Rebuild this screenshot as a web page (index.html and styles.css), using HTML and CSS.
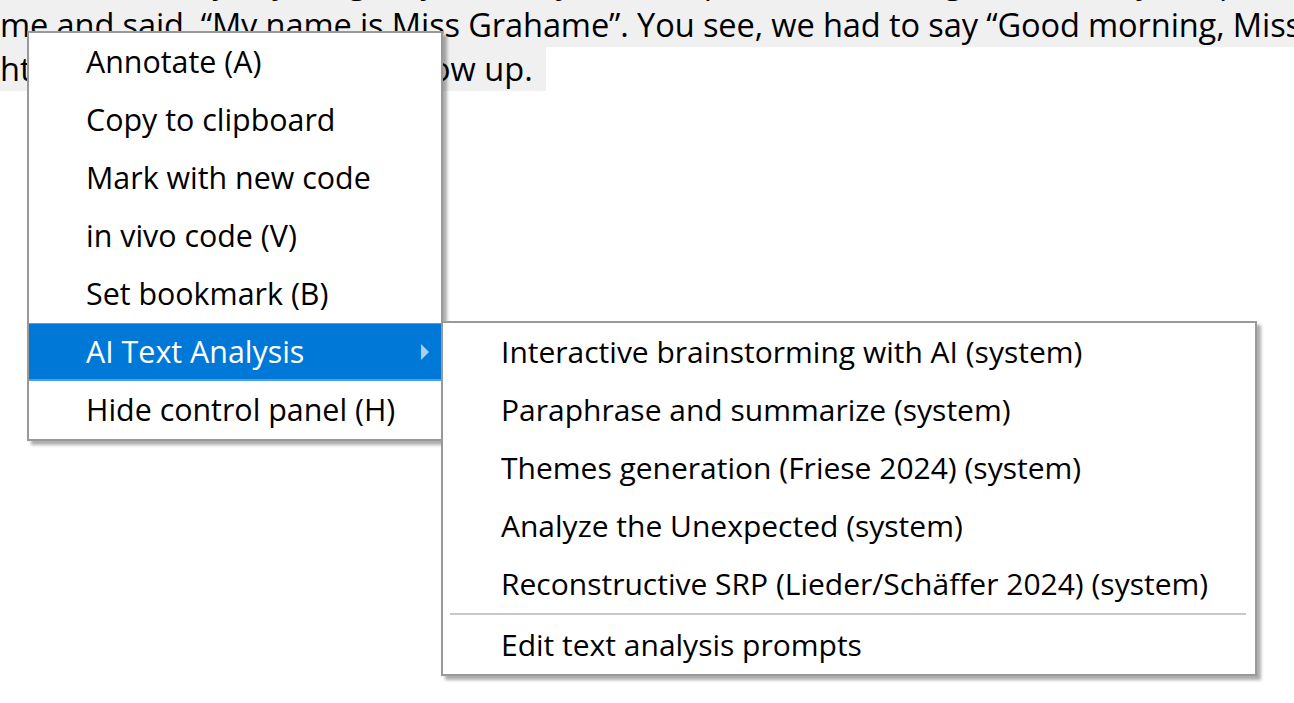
FILE: index.html
```html
<!DOCTYPE html>
<html lang="en">
<head>
<meta charset="utf-8">
<title>Context menu</title>
<link rel="stylesheet" href="styles.css">
</head>
<body>
<div class="doc">
  <div class="line full">on the first day, a young lady came by, stood up in front of us, greeted everyone politely and introduced herself to</div>
  <div class="line full tight">me and said. “My name is Miss Grahame”. You see, we had to say “Good morning, Miss Grahame” every day</div>
  <div class="line part">ht to her, until we were to grow up.</div>
</div>

<div class="menu main-menu">
  <div class="item">Annotate (A)</div>
  <div class="item">Copy to clipboard</div>
  <div class="item">Mark with new code</div>
  <div class="item">in vivo code (V)</div>
  <div class="item">Set bookmark (B)</div>
  <div class="item active">AI Text Analysis<span class="arrow"></span></div>
  <div class="item">Hide control panel (H)</div>
</div>

<div class="menu sub-menu">
  <div class="item">Interactive brainstorming with AI (system)</div>
  <div class="item">Paraphrase and summarize (system)</div>
  <div class="item">Themes generation (Friese 2024) (system)</div>
  <div class="item">Analyze the Unexpected (system)</div>
  <div class="item">Reconstructive SRP (Lieder/Schäffer 2024) (system)</div>
  <div class="separator"></div>
  <div class="item">Edit text analysis prompts</div>
</div>
</body>
</html>
```

FILE: styles.css
```css
html, body {
  margin: 0;
  padding: 0;
  background: #ffffff;
  overflow: hidden;
}

body {
  width: 1294px;
  height: 703px;
  position: relative;
  font-family: "Open Sans", "Noto Sans", sans-serif;
  color: #000;
}

.doc {
  margin-top: -41px;
  font-size: 32.6px;
}

.line {
  height: 44px;
  line-height: 44px;
  white-space: nowrap;
  overflow: hidden;
  background: #f0f0f0;
}

.line.full {
  width: 100%;
}

.line.tight {
  letter-spacing: -0.12px;
}

.line.part {
  width: 546px;
}

.menu {
  position: absolute;
  background: #ffffff;
  border: 2px solid #999999;
  box-shadow: 4px 4px 3px rgba(0, 0, 0, 0.32);
  font-size: 30px;
}

.main-menu {
  left: 27px;
  top: 31px;
  width: 412px;
  font-size: 30.4px;
}

.sub-menu {
  left: 441px;
  top: 321px;
  width: 812px;
}

.item {
  height: 58px;
  line-height: 58px;
  padding-left: 57px;
  display: flex;
  align-items: center;
  white-space: nowrap;
}

.sub-menu .item {
  padding-left: 58px;
}

.item.active {
  background: #0078d7;
  color: #ffffff;
  box-sizing: border-box;
  border-top: 1px solid #4aa1ea;
  border-bottom: 2px solid #4aa1ea;
}

.arrow {
  margin-left: auto;
  margin-right: 12px;
  width: 0;
  height: 0;
  border-left: 8px solid #a9d0f3;
  border-top: 8px solid transparent;
  border-bottom: 8px solid transparent;
}

.separator {
  height: 2px;
  background: #c8c8c8;
  margin: 0 9px 1px 7px;
}
```
